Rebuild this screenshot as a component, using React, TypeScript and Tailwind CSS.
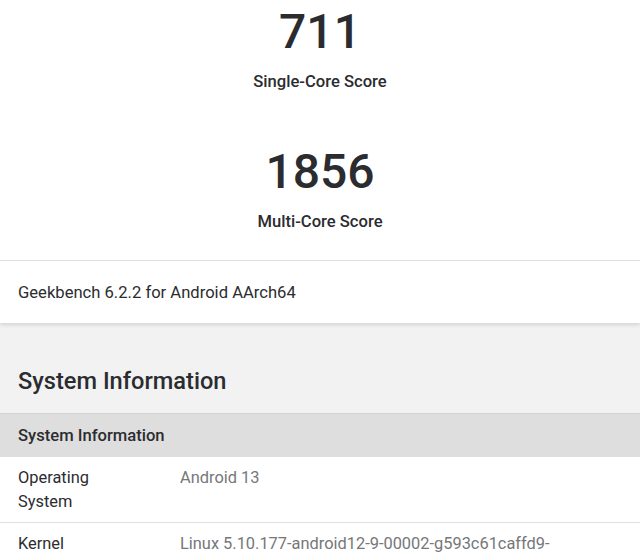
import React from 'react';

const scores = [
  { value: '711', label: 'Single-Core Score' },
  { value: '1856', label: 'Multi-Core Score' },
];

const rows = [
  { name: 'Operating System', value: 'Android 13' },
  { name: 'Kernel', value: 'Linux 5.10.177-android12-9-00002-g593c61caffd9-' },
];

const App: React.FC = () => {
  return (
    <div className="min-h-screen w-full bg-[#f2f2f2] text-[#2b2c2f] font-['Roboto',sans-serif] overflow-hidden">
      <div className="bg-white border-b border-[#e3e3e3] flex flex-col items-center pt-[2px] h-[261px]">
        {scores.map((s) => (
          <div key={s.label} className="flex flex-col items-center mb-[50px]">
            <div className="text-[48px] leading-[60px] font-medium">{s.value}</div>
            <div className="text-[16.6px] leading-[20px] font-medium mt-[10px]">{s.label}</div>
          </div>
        ))}
      </div>

      <div className="bg-white px-[18px] h-[62px] flex items-center pt-[3px] shadow-[0_2px_4px_rgba(0,0,0,0.12)] relative">
        <span className="text-[16.6px]">Geekbench 6.2.2 for Android AArch64</span>
      </div>

      <div className="px-[18px] h-[90px] flex items-center pt-[28px]">
        <h2 className="text-[23.6px] font-medium">System Information</h2>
      </div>

      <div className="border-t border-[#d4d4d4]">
        <div className="bg-[#dedede] px-[18px] h-[43px] flex items-center pt-[2px]">
          <span className="text-[16.6px] font-medium">System Information</span>
        </div>
        {rows.map((r) => (
          <div key={r.name} className="bg-white flex px-[18px] pt-[9px] pb-[8px] border-b border-[#e0e0e0] text-[16.4px] leading-[24px]">
            <div className="w-[162px] pr-4">{r.name === 'Operating System' ? (<>Operating<br />System</>) : r.name}</div>
            <div className="flex-1 text-[#75777a]">{r.value}</div>
          </div>
        ))}
      </div>
    </div>
  );
};

export default App;
